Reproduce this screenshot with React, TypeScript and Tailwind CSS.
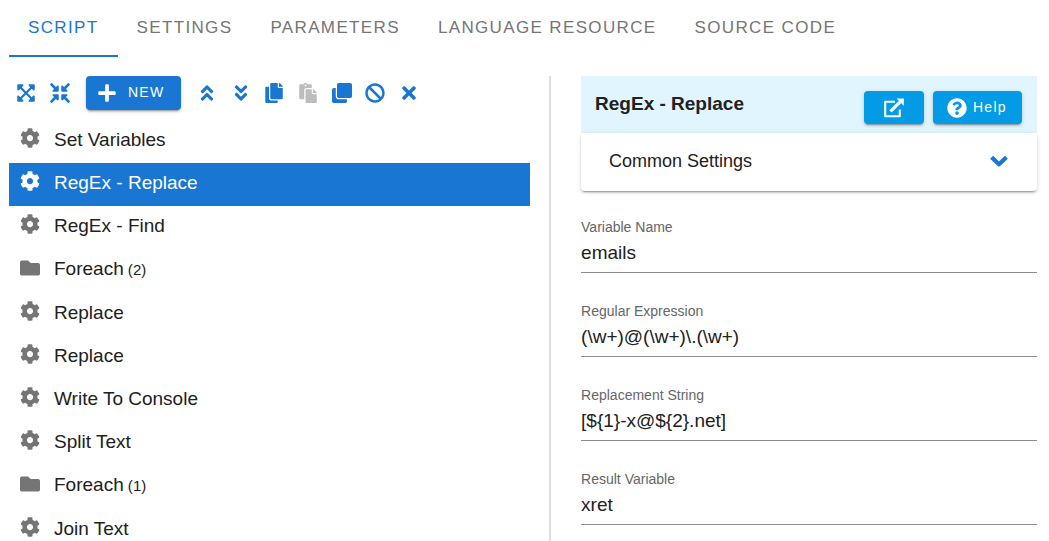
import { useState } from "react";
import {
  FaAngleDoubleDown,
  FaAngleDoubleUp,
  FaBan,
  FaClone,
  FaCog,
  FaCompressArrowsAlt,
  FaCopy,
  FaExpandArrowsAlt,
  FaFolder,
  FaPaste,
  FaPlus,
  FaQuestionCircle,
  FaTimes,
} from "react-icons/fa";

const tabs = ["Script", "Settings", "Parameters", "Language Resource", "Source Code"];

const steps: { name: string; count?: number }[] = [
  { name: "Set Variables" },
  { name: "RegEx - Replace" },
  { name: "RegEx - Find" },
  { name: "Foreach", count: 2 },
  { name: "Replace" },
  { name: "Replace" },
  { name: "Write To Console" },
  { name: "Split Text" },
  { name: "Foreach", count: 1 },
  { name: "Join Text" },
];

const fields = [
  { id: "variable-name", label: "Variable Name", value: "emails" },
  { id: "regular-expression", label: "Regular Expression", value: "(\\w+)@(\\w+)\\.(\\w+)" },
  { id: "replacement-string", label: "Replacement String", value: "[${1}-x@${2}.net]" },
  { id: "result-variable", label: "Result Variable", value: "xret" },
];

const actions = [
  { label: "Move up", Icon: FaAngleDoubleUp },
  { label: "Move down", Icon: FaAngleDoubleDown },
  { label: "Copy", Icon: FaCopy },
  { label: "Paste", Icon: FaPaste, disabled: true },
  { label: "Duplicate", Icon: FaClone },
  { label: "Disable", Icon: FaBan },
  { label: "Delete", Icon: FaTimes },
];

const raised =
  "shadow-[0_3px_1px_-2px_rgba(0,0,0,0.2),0_2px_2px_0_rgba(0,0,0,0.14),0_1px_5px_0_rgba(0,0,0,0.12)]";

function OpenIcon() {
  return (
    <svg viewBox="0 0 20 20" className="size-5" fill="none" stroke="currentColor" aria-hidden="true">
      <path d="M11 3.7H1.2V18.2H15.8V11.6" strokeWidth="2.1" strokeLinejoin="round" />
      <path d="M6.4 13.4 16.2 3.9" strokeWidth="3.3" />
      <path d="M12.6.6H19.8V7.8Z" fill="currentColor" stroke="none" />
    </svg>
  );
}

function ChevronIcon() {
  return (
    <svg viewBox="0 0 20 14" className="h-[14px] w-5 text-[#1976d2]" fill="none" aria-hidden="true">
      <path d="M2.6 3.2 10 10.2 17.4 3.2" stroke="currentColor" strokeWidth="4.2" strokeLinejoin="round" />
    </svg>
  );
}

function Tabs() {
  const [active, setActive] = useState(0);
  return (
    <nav role="tablist" className="flex shrink-0 pl-[9px]">
      {tabs.map((tab, i) => (
        <button
          key={tab}
          role="tab"
          aria-selected={i === active}
          onClick={() => setActive(i)}
          className={`h-[57px] border-b-2 px-[19px] text-[17px] tracking-[0.08em] whitespace-nowrap uppercase ${
            i === active ? "border-[#1976d2] text-[#1976d2]" : "border-transparent text-[#757575]"
          }`}
        >
          {tab}
        </button>
      ))}
    </nav>
  );
}

function Toolbar() {
  return (
    <div className="flex h-[34px] items-center text-[20px] text-[#1976d2]">
      <button aria-label="Expand all" className="grid w-[34px] place-items-center">
        <FaExpandArrowsAlt />
      </button>
      <button aria-label="Collapse all" className="grid w-[34px] place-items-center">
        <FaCompressArrowsAlt />
      </button>
      <button
        className={`mx-[9px] flex h-[34px] w-[95px] items-center gap-[11px] rounded bg-[#1976d2] pl-[11px] text-white ${raised}`}
      >
        <FaPlus />
        <span className="pb-[2px] text-[14px] tracking-[0.09em]">NEW</span>
      </button>
      <div className="grid w-[236px] grid-cols-7">
        {actions.map(({ label, Icon, disabled }) => (
          <button
            key={label}
            aria-label={label}
            disabled={disabled}
            className="grid place-items-center disabled:text-[#bdbdbd]"
          >
            <Icon />
          </button>
        ))}
      </div>
    </div>
  );
}

function StepList() {
  const [selected, setSelected] = useState(1);
  return (
    <ul className="mt-[10px] grid h-[432px] auto-rows-fr">
      {steps.map((step, i) => {
        const Icon = step.count ? FaFolder : FaCog;
        const isSelected = i === selected;
        return (
          <li key={i} className="grid">
            <button
              onClick={() => setSelected(i)}
              className={`flex items-center gap-[14px] pb-[3px] pl-[11px] text-left text-[19px] ${
                isSelected ? "bg-[#1976d2] text-white" : "text-[#212121]"
              }`}
            >
              <Icon className={`mb-1 size-5 ${isSelected ? "text-white" : "text-[#757575]"}`} />
              <span>
                {step.name}
                {step.count && <span className="text-[15px]"> ({step.count})</span>}
              </span>
            </button>
          </li>
        );
      })}
    </ul>
  );
}

function Details() {
  return (
    <section>
      <header className="flex h-[57px] items-start justify-between bg-[#e1f5fe] pr-[15px] pl-[14px]">
        <h2 className="pt-[14px] text-[19px] leading-[27px] font-bold text-[#212121]">
          RegEx - Replace
        </h2>
        <div className="flex gap-[9px] pt-[15px] text-[20px] text-white">
          <button
            aria-label="Open in new window"
            className={`grid h-[33px] w-[60px] place-items-center rounded bg-[#039be5] ${raised}`}
          >
            <OpenIcon />
          </button>
          <button
            className={`flex h-[33px] w-[89px] items-center gap-[6px] rounded bg-[#039be5] pl-[14px] ${raised}`}
          >
            <FaQuestionCircle />
            <span className="text-[14px] tracking-[0.09em]">Help</span>
          </button>
        </div>
      </header>
      <button
        aria-expanded="false"
        className={`flex h-[58px] w-full items-center justify-between rounded bg-white pr-[28px] pb-[2px] pl-[28px] text-[18px] text-[#212121] ${raised}`}
      >
        Common Settings
        <ChevronIcon />
      </button>
      <form className="mt-[26px] flex flex-col gap-[28px]">
        {fields.map((field) => (
          <div key={field.id} className="flex flex-col border-b border-[#8c8c8c]">
            <label htmlFor={field.id} className="text-[14px] leading-[20px] text-[#666666]">
              {field.label}
            </label>
            <input
              id={field.id}
              defaultValue={field.value}
              className="h-[35px] w-full pb-[3px] text-[19px] text-[#212121] outline-none"
            />
          </div>
        ))}
      </form>
    </section>
  );
}

export default function App() {
  return (
    <div className="flex h-screen flex-col overflow-hidden bg-white font-['Liberation_Sans',Arial,sans-serif]">
      <Tabs />
      <main className="mt-[19px] grid min-h-0 flex-1 grid-cols-[8fr_51px_7fr] overflow-y-auto pr-3 pl-[9px] [scrollbar-width:none]">
        <section>
          <Toolbar />
          <StepList />
        </section>
        <div className="ml-[19px] w-[2px] bg-[#dddddd]" />
        <Details />
      </main>
    </div>
  );
}
